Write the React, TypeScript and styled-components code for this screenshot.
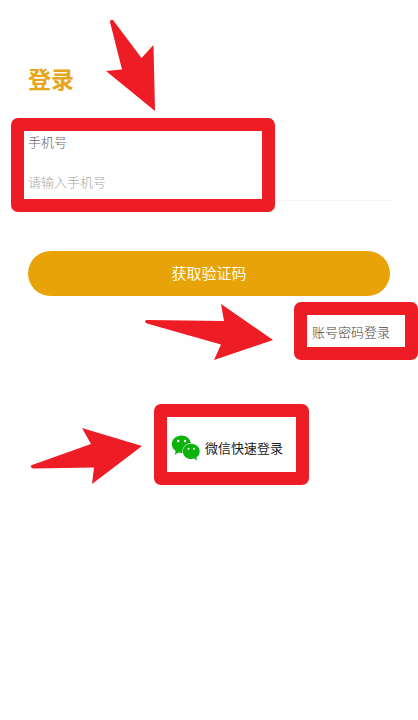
import React from 'react';
import styled, { createGlobalStyle } from 'styled-components';

const GlobalStyle = createGlobalStyle`
  * { box-sizing: border-box; }
  body {
    margin: 0;
    background: #fefefe;
    font-family: "Noto Sans CJK SC", "Noto Sans", sans-serif;
  }
`;

const MARK = '#ee1c25';

const Page = styled.main`
  position: relative;
  display: flex;
  flex-direction: column;
  min-height: 100vh;
  padding: 62px 28px 0;
  overflow: hidden;
`;

const Title = styled.h1`
  margin: 0 0 38px;
  font-size: 23px;
  line-height: 32px;
  font-weight: 700;
  color: #e6a61c;
`;

const Field = styled.div`
  position: relative;
  display: flex;
  flex-direction: column;
  gap: 19px;
  padding-bottom: 9px;
  border-bottom: 1px solid #f4f4f4;
`;

const Label = styled.label`
  font-size: 13px;
  line-height: 20px;
  font-weight: 300;
  color: #666;
`;

const Input = styled.input`
  width: 100%;
  height: 20px;
  padding: 0;
  border: 0;
  outline: 0;
  background: transparent;
  font: inherit;
  font-size: 13px;
  font-weight: 300;
  color: #444;
  &::placeholder { color: #aaa; opacity: 1; }
`;

const Submit = styled.button`
  height: 45px;
  margin-top: 50px;
  padding: 0 0 2px;
  border: 0;
  border-radius: 23px;
  background: #e8a308;
  color: #fffbea;
  font: inherit;
  font-size: 15px;
  line-height: 24px;
  cursor: pointer;
`;

const TextLink = styled.a`
  position: relative;
  align-self: flex-end;
  margin-top: 26px;
  font-size: 13px;
  line-height: 20px;
  font-weight: 300;
  color: #444;
  text-decoration: none;
`;

const WechatButton = styled.button`
  position: relative;
  align-self: center;
  display: flex;
  align-items: center;
  gap: 5px;
  height: 30px;
  margin: 91px 0 0 36px;
  padding: 0;
  border: 0;
  background: transparent;
  font: inherit;
  font-size: 13px;
  line-height: 20px;
  color: #222;
  cursor: pointer;
`;

const Frame = styled.span<{ $inset: string; $width?: number }>`
  position: absolute;
  inset: ${p => p.$inset};
  ${p => p.$width && `width: ${p.$width}px;`}
  border: 13px solid ${MARK};
  border-radius: 7px;
  pointer-events: none;
`;

const Pointer = styled.svg<{ $x: number; $y: number }>`
  position: absolute;
  left: ${p => p.$x}px;
  top: ${p => p.$y}px;
  fill: ${MARK};
  pointer-events: none;
`;

function WechatIcon() {
  return (
    <svg width="29" height="28" viewBox="0 0 29 28" aria-hidden="true">
      <path
        fill="#0bb30b"
        d="M10.500 1.500C5 1.500.8 5.300.8 10c0 2.800 1.500 5.300 3.900 6.900L3.700 20.800l3.900-2.200c1 .2 2 .4 3 .4h.9C10.700 13.800 14.500 9.300 20 9C18.900 4.600 15.200 1.500 10.500 1.500Z"
      />
      <path
        fill="#0bb30b"
        d="M20.200 9.800c-4.700 0-8.300 3.400-8.300 7.600s3.600 7.600 8.300 7.600c1 0 2-.2 2.900-.5l3.100 1.900-.8-3c2-1.400 3.300-3.600 3.300-6C28.700 13.200 24.900 9.800 20.200 9.800Z"
      />
      <g fill="#fff">
        <circle cx="7.200" cy="7" r="1.200" />
        <circle cx="14" cy="7" r="1.200" />
        <circle cx="17.500" cy="14.700" r="1" />
        <circle cx="23" cy="14.700" r="1" />
      </g>
    </svg>
  );
}

export default function App() {
  return (
    <>
      <GlobalStyle />
      <Page>
        <Title>登录</Title>
        <Field>
          <Label htmlFor="phone">手机号</Label>
          <Input id="phone" type="tel" placeholder="请输入手机号" />
          <Frame $inset="-14px auto -12px -17px" $width={264} />
        </Field>
        <Submit type="button">获取验证码</Submit>
        <TextLink href="#password">
          账号密码登录
          <Frame $inset="-20px -28px -18px -18px" />
        </TextLink>
        <WechatButton type="button">
          <WechatIcon />
          微信快速登录
          <Frame $inset="-29px -26px -22px -17px" />
        </WechatButton>

        <Pointer $x={105} $y={19} width="52" height="94" viewBox="0 0 52 94" aria-hidden="true">
          <path d="M5 3Q5 0 8 1L36.500 39L48.500 26L50 92L1 52L17 50.500Z" />
        </Pointer>
        <Pointer $x={144} $y={303} width="130" height="60" viewBox="0 0 130 60" aria-hidden="true">
          <path d="M3 17L80 18L77 1L129 37L70 57L77 41.500L3 20.500Q-1 18 3 17Z" />
        </Pointer>
        <Pointer $x={30} $y={427} width="114" height="60" viewBox="0 0 114 60" aria-hidden="true">
          <path d="M2 38L61 17L52 1L112 19L62 57L64 40.500L3 41.500Q-1 40 2 38Z" />
        </Pointer>
      </Page>
    </>
  );
}
